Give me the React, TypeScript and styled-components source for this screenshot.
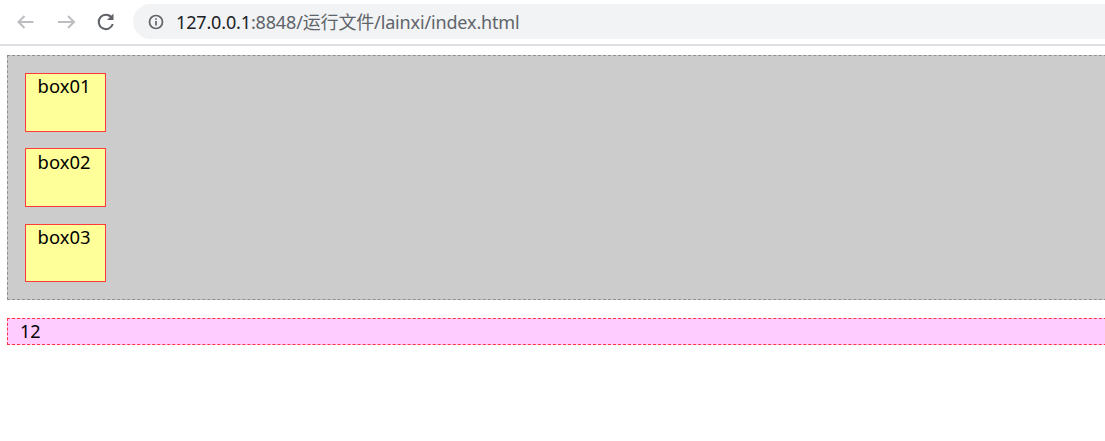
import React from "react";
import styled, { createGlobalStyle } from "styled-components";

const Global = createGlobalStyle`
  html, body { margin: 0; padding: 0; background: #fff; overflow: hidden; }
  body { font-family: "Noto Sans", "Noto Sans CJK SC", sans-serif; }
  * { box-sizing: border-box; }
`;
const Page = styled.div`
  width: 1105px;
  height: 441px;
  overflow: hidden;
`;
const Toolbar = styled.header`
  height: 46px;
  border-bottom: 2px solid #dedfe3;
  padding: 4px 0 5px 16px;
  display: flex;
  align-items: center;
`;
const NavIcon = styled.svg<{ $dim?: boolean }>`
  width: 20px;
  height: 20px;
  flex: none;
  margin-right: 20px;
  fill: none;
  stroke: ${(p) => (p.$dim ? "#bcbec1" : "#5f6368")};
  stroke-width: 2;
`;
const Omnibox = styled.div`
  flex: 1;
  height: 35px;
  margin-left: -3px;
  margin-right: -40px;
  border-radius: 18px 0 0 18px;
  background: #f1f3f4;
  display: flex;
  align-items: center;
  padding-left: 15px;
  gap: 12px;
  font-size: 18px;
  letter-spacing: -0.15px;
  color: #60646a;
  white-space: nowrap;
`;
const Address = styled.span`
  padding-bottom: 2px;
`;
const Host = styled.span`
  color: #202124;
`;
const Main = styled.main`
  padding: 9px 0 0 7px;
`;
const Panel = styled.section`
  width: 1200px;
  height: 245px;
  border: 1px dashed #8f8f8f;
  background: #cccccc;
  padding: 17px;
  display: flex;
  flex-direction: column;
  gap: 16px;
`;
const Box = styled.div`
  flex: none;
  width: 81px;
  height: 59px;
  border: 1px solid #ff3b3b;
  background: #ffff99;
  color: #000;
  font-size: 18.400px;
  line-height: 24px;
  text-align: center;
  padding-right: 3px;
  &:nth-child(2) { padding-top: 1px; }
  &:nth-child(3) { margin-top: 1px; height: 58px; }
`;
const Footer = styled.div`
  width: 1200px;
  height: 27px;
  margin-top: 18px;
  border: 1px dashed #ff3344;
  background: #ffccff;
  color: #000;
  font-size: 18px;
  line-height: 25px;
  padding-left: 12px;
`;

export default function App() {
  return (
    <Page>
      <Global />
      <Toolbar>
        <NavIcon $dim viewBox="0 0 20 20"><path d="M17.500 10H2.500M8.500 4l-6 6 6 6" /></NavIcon>
        <NavIcon $dim viewBox="0 0 20 20"><path d="M2 10h16M12 4l6 6-6 6" /></NavIcon>
        <NavIcon viewBox="0 0 20 20"><path d="M16.800 12a7.200 7.200 0 1 1-1.200-6.500" /><path d="M17.500 1.500v6.500h-6.500" fill="#5f6368" stroke="none" /></NavIcon>
        <Omnibox>
          <svg width="16" height="16" viewBox="0 0 16 16" fill="none" stroke="#5f6368" strokeWidth="1.700" style={{ flex: "none" }}>
            <circle cx="8" cy="8" r="6.500" />
            <path d="M8 7v4.500M8 4.200v1.600" />
          </svg>
          <Address><Host>127.0.0.1</Host>:8848/运行文件/lainxi/index.html</Address>
        </Omnibox>
      </Toolbar>
      <Main>
        <Panel>
          <Box>box01</Box>
          <Box>box02</Box>
          <Box>box03</Box>
        </Panel>
        <Footer>12</Footer>
      </Main>
    </Page>
  );
}
